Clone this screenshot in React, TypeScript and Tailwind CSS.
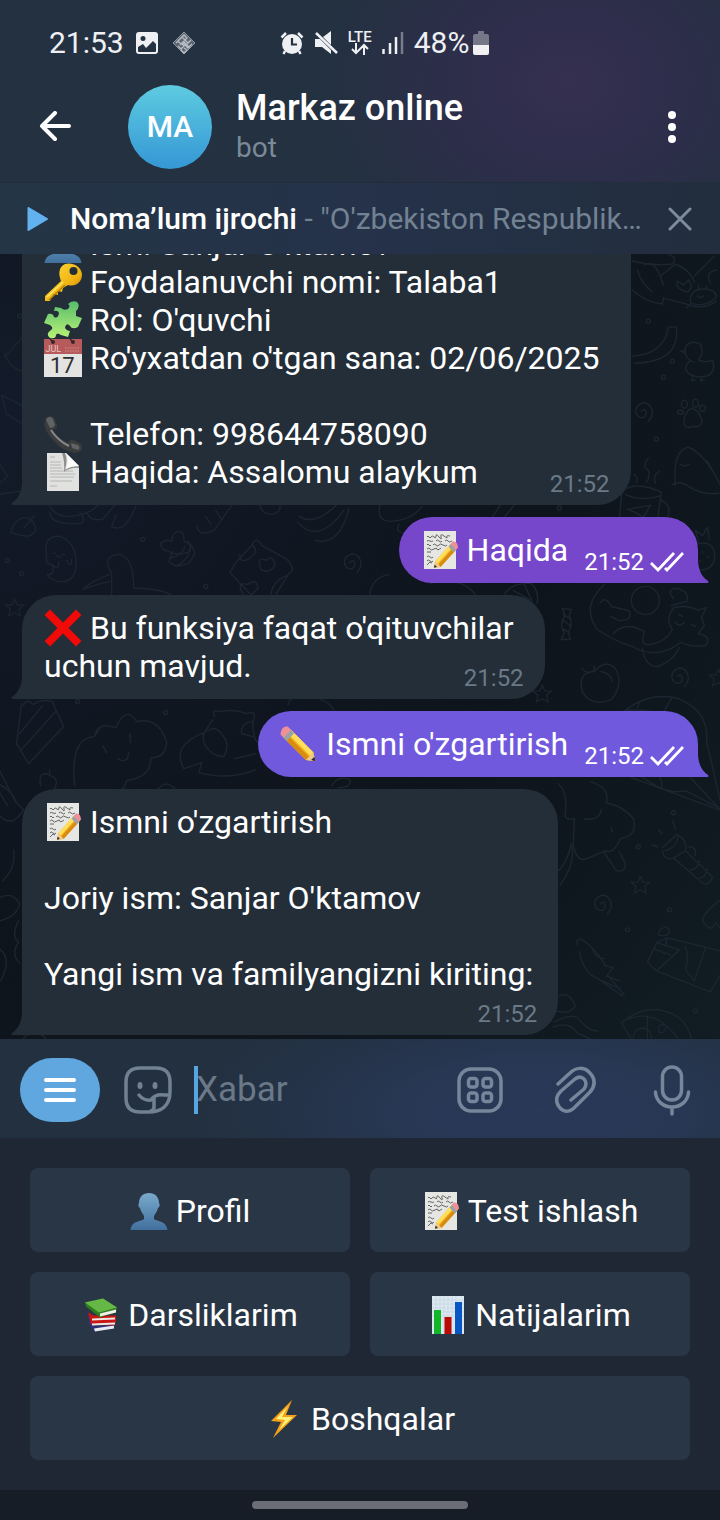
import type { ReactNode } from "react";

type EmojiName =
  | "bust" | "key" | "puzzle" | "calendar" | "phone" | "page"
  | "memo" | "cross" | "pencil" | "books" | "chart" | "bolt";

const pencilParts = (
  <>
    <path d="M2 31 L4 23 L25 3 L32 10 L11 30 Z" fill="#f5b71c" />
    <path d="M4 23 L25 3 L28 6 L7 26 Z" fill="#ffdf5c" />
    <path d="M8 27 L29 7 L32 10 L11 30 Z" fill="#d98a12" />
    <path d="M2 31 L4 23 L11 30 Z" fill="#efc88e" />
    <path d="M2 31 L3 27 L6 30 Z" fill="#2a2a2a" />
    <path d="M22 6 L26 2 L33 9 L29 13 Z" fill="#9aa3a8" />
    <path d="M25 3 L28 0 Q34 -1 35 7 L32 10 Z" fill="#ef8f96" />
  </>
);

const emojiArt: Record<EmojiName, ReactNode> = {
  bust: (
    <>
      <defs>
        <linearGradient id="bustFill" x1="0" y1="0" x2="0" y2="1">
          <stop offset="0" stopColor="#79aacb" />
          <stop offset="1" stopColor="#42709f" />
        </linearGradient>
      </defs>
      <path d="M19 1 C25 1 29 5 29 11 C30 12 30 15 28 16 C27 20 25 22 24 24 V27 C27 30 36 28 37.500 38 H0.500 C2 28 11 30 14 27 V24 C13 22 11 20 10 16 C8 15 8 12 9 11 C9 5 13 1 19 1 Z" fill="url(#bustFill)" />
    </>
  ),
  key: (
    <>
      <defs>
        <linearGradient id="keyFill" x1="0" y1="0" x2="1" y2="1">
          <stop offset="0" stopColor="#ffdf3d" />
          <stop offset="0.6" stopColor="#f1b313" />
          <stop offset="1" stopColor="#b77606" />
        </linearGradient>
      </defs>
      <path d="M21 1 C28 -1 37 3 38 11 C38 20 31 24 24 22 L19 25 L18 29 L14 28 L14 32 L10 31 L7 35 L6 38 L1 38 L1 33 L17 18 C14 10 15 4 21 1 Z" fill="url(#keyFill)" />
      <circle cx="29.500" cy="8" r="4" fill="#232e39" />
      <path d="M3 34 L19 19" stroke="#ffe766" strokeWidth="1.500" />
      <path d="M5 37 L21 22" stroke="#b67a08" strokeWidth="1.200" />
    </>
  ),
  puzzle: (
    <>
      <defs>
        <linearGradient id="puzzleFill" x1="0" y1="0" x2="0" y2="1">
          <stop offset="0" stopColor="#58bd6c" />
          <stop offset="1" stopColor="#b8f277" />
        </linearGradient>
      </defs>
      <path d="M11 6 L17 7 Q20 10 24 8 Q27 5 24 3 Q28 -1 33 1 Q37 5 32 10 L32 15 L38 17 L34 26 Q28 29 26 25 Q23 21 21 26 Q21 29 26 30 L24 36 L17 34 Q13 31 12 34 Q12 38 6 37 Q1 33 7 29 Q10 27 6 24 L0 22 L4 13 Q9 12 10 16 Q14 18 15 12 Q14 9 10 10 Z" fill="url(#puzzleFill)" />
    </>
  ),
  calendar: (
    <>
      <rect x="0" y="0" width="38" height="38" fill="#e3e4e2" />
      <rect x="0" y="0" width="38" height="15" fill="#b65a5b" />
      <circle cx="9" cy="3" r="2" fill="#39262b" />
      <circle cx="29" cy="3" r="2" fill="#39262b" />
      <path d="M9 3 L6 0 M29 3 L26 0" stroke="#39262b" strokeWidth="1.500" />
      <text x="1.500" y="13" fontSize="9" fill="#e9c6c4" fontFamily="Roboto, sans-serif">JUL</text>
      <path d="M21 9 H36 M21 12 H36" stroke="#cf8b8b" strokeWidth="1.200" strokeDasharray="1.500 1" />
      <text x="6" y="34" fontSize="22" fill="#2d2f31" fontFamily="Roboto, sans-serif">17</text>
    </>
  ),
  phone: (
    <>
      <path d="M2 3 Q7 -1 10 3 L13 10 Q14 13 9 15 Q13 23 24 28 Q26 23 30 25 L37 29 Q40 34 35 37 Q27 40 15 31 Q2 20 0 9 Z" fill="#3a3b3d" />
      <path d="M2 4 Q6 0 9 4 L11 10 Q10 13 6 13 L3 7 Z" fill="#606264" />
      <path d="M7 15 Q13 25 25 31" stroke="#85888a" strokeWidth="2" fill="none" />
      <path d="M27 28 L34 30 Q37 33 34 35 L28 33 Z" fill="#606264" />
    </>
  ),
  page: (
    <>
      <path d="M3 0 H22 L35 13 V38 H3 Z" fill="#e1e2e0" />
      <path d="M21 17 Q24 7 21 0 L18 0 Q21 9 20 19 Q27 14 35 15 V13 Q26 13 21 17 Z" fill="#8e8e8d" />
      <path d="M22 0 L35 13 Q27 13 22 16 Q25 7 22 0 Z" fill="#fbfbfa" />
      <path d="M6 4 H11 M6 9 H17 M6 12 H17 M6 15 H18 M6 18 H29 M6 21 H31 M6 24 H30 M6 28 H28 M6 33 H13" stroke="#b0b1b0" strokeWidth="0.900" />
    </>
  ),
  memo: (
    <>
      <rect x="3" y="0" width="32" height="38" fill="#e6e6e2" />
      <path d="M6 6 q1 -2 2 0 t2 0 t3 0 t2 -1 t3 1 t2 0 t3 -1 t3 1 t3 -1 M6 10 q1 -1 3 0 t3 0 M15 10 q1 -2 3 0 t3 0 M24 10 q2 -2 3 0 t4 0 M6 14 q1 -2 2 0 t2 0 M12 14 q1 -2 3 0 t3 0 t4 0 t4 0 M6 18 q2 -2 3 0 t4 0 t3 0 t4 -1 M6 21 h4 M6 26 q1 -2 3 0 t3 0 M6 30 q1 -2 3 0 t3 0 M6 34 l3 -3 l2 1" stroke="#55565a" strokeWidth="0.900" fill="none" />
      <g transform="translate(11.500 10.500) scale(0.730 0.850)">{pencilParts}</g>
    </>
  ),
  cross: (
    <path d="M6 0.500 L19 13.500 L32 0.500 L37.500 6 L24.500 19 L37.500 32 L32 37.500 L19 24.500 L6 37.500 L0.500 32 L13.500 19 L0.500 6 Z" fill="#f00a08" />
  ),
  pencil: <g transform="translate(37.500 1.500) scale(-1.060 1.120)">{pencilParts}</g>,
  books: (
    <g transform="translate(1 1.500)">
      <path d="M2 13 L6 22 L5 25 L11 34 L31 31 L31 27 L12 29 Z" fill="#30307d" />
      <path d="M11 31 L31 28 L31 31 L12 34 Z" fill="#e9eaf0" />
      <path d="M5 15 L8 27 L31 28 L33 24 L33 18 L11 18 Z" fill="#c81613" />
      <path d="M9 21 L32 20 V22 L9 23 Z M9 26 L32 25 V27 L9 28 Z" fill="#eee7e6" />
      <path d="M2 5 L20 1 L34 10 L33 15 L17 20 L3 9 Z" fill="#2d7d1e" />
      <path d="M2 5 L20 1 L34 10 L16 15 Z" fill="#65b845" />
      <path d="M17 16 L33 12 V15 L17 19 Z" fill="#f0f1ec" />
    </g>
  ),
  chart: (
    <>
      <rect x="3" y="0" width="32" height="38" fill="#dce8f1" />
      <path d="M3 4 H35 M3 8 H35 M3 12 H35 M3 16 H35 M3 20 H35 M7 0 V38 M11 0 V38 M15 0 V38 M19 0 V38 M23 0 V38 M27 0 V38" stroke="#c1d2df" strokeWidth="0.600" />
      <rect x="5" y="14" width="7" height="24" fill="#11b727" />
      <rect x="15.500" y="21" width="7" height="17" fill="#b90a08" />
      <rect x="26" y="6" width="7" height="32" fill="#0757c4" />
    </>
  ),
  bolt: (
    <>
      <path d="M27 0 L6 21 L16 22 L8 38 L32 15 L21 15 Z" fill="#f3a01a" />
      <path d="M23 6 L11 19 L20 20 L14 30 L28 17 L17 17 Z" fill="#fff27a" />
    </>
  ),
};

function Emoji({ name }: { name: EmojiName }) {
  return (
    <svg viewBox="0 0 38 38" className="size-[38px] shrink-0 overflow-visible" aria-hidden="true">
      {emojiArt[name]}
    </svg>
  );
}

function Line({ emoji, children }: { emoji?: EmojiName; children?: ReactNode }) {
  return (
    <p className="flex h-[38px] items-center gap-2 whitespace-nowrap">
      {emoji && <Emoji name={emoji} />}
      <span>{children}</span>
    </p>
  );
}

const star = "m0 -10 l3 7 l8 0 l-6 5 l2 8 l-7 -4 l-7 4 l2 -8 l-6 -5 l8 0 Z";
const spiral = "m0 0 q4 -4 5 2 q-1 6 -7 4 q-6 -4 -2 -11 q7 -7 13 0 q5 8 -2 15";

const stars: [number, number][] = [[15, 607], [542, 693], [640, 884], [718, 677]];
const spirals: [number, number][] = [[641, 411], [350, 562], [677, 676], [600, 903]];
const dots: [number, number][] = [
  [20, 316], [648, 321], [672, 361], [663, 377], [656, 439], [559, 508], [143, 539], [22, 573], [206, 586],
  [78, 701], [166, 712], [673, 812], [638, 846], [669, 909], [627, 929], [695, 1010], [8, 560],
];

function Wallpaper() {
  return (
    <svg
      viewBox="0 254 720 784"
      preserveAspectRatio="xMidYMid slice"
      className="absolute inset-0 size-full"
      fill="none"
      stroke="#1c2631"
      strokeWidth="1.400"
      strokeLinecap="round"
      strokeLinejoin="round"
      aria-hidden="true"
    >
      {stars.map(([x, y]) => <path key={`${x}-${y}`} transform={`translate(${x} ${y}) scale(.85)`} d={star} />)}
      {spirals.map(([x, y]) => <path key={`${x}-${y}`} transform={`translate(${x} ${y})`} d={spiral} />)}
      {dots.map(([x, y]) => <circle key={`${x}-${y}`} cx={x} cy={y} r="2" />)}
      {/* plant, crab, ribbon and chick */}
      <path d="M632 261 Q650 266 672 264 Q678 258 668 254 M637 270 Q640 282 652 292 M644 265 Q655 258 663 285 M660 276 L675 264 Q690 270 694 282 M632 290 Q645 302 662 304 L663 298 L690 305 Q702 310 716 301 M694 276 L714 256" />
      <path d="M690 297 Q693 288 704 289 Q716 290 716 297 Q706 308 690 303 Z M687 292 Q674 289 677 281 L683 285 L688 280 Q694 288 687 292 Z M710 283 Q704 272 716 270 M697 296 q3 3 6 0 M689 305 l-3 3 M698 289 v-4 M706 289 v-3" />
      <path d="M632 356 Q664 354 668 327 L676 327 Q680 362 634 363" />
      <path d="M694 362 Q683 359 685 347 Q690 339 700 344 Q704 353 698 360 Q706 363 712 360 Q716 372 706 376 Q690 379 685 369 Q685 365 689 361 M685 350 l-5 1 l5 2 M692 377 v4 M701 377 v4 M691 380 h4 M700 380 h4" />
      {/* paw, cat and steaming cup */}
      <path d="M692 408 Q699 411 702 421 Q698 429 693 426 Q687 429 684 425 Q682 417 688 410 Z" />
      <ellipse cx="684" cy="404" rx="3" ry="4" /><ellipse cx="695" cy="403" rx="3" ry="4" /><ellipse cx="702" cy="408" rx="3" ry="3" /><ellipse cx="680" cy="412" rx="3" ry="2" />
      <path d="M675 485 Q672 450 688 447 Q705 454 720 485 M672 484 Q680 480 688 486 Q702 495 718 493 M680 464 q4 3 9 0 M707 461 l4 7" />
      <path d="M626 488 Q640 482 661 492 L657 520 M622 488 L619 518 M625 494 Q642 502 661 495 M661 500 Q672 505 667 518 M627 509 L650 505 L643 517 L635 512 Z M648 458 q-7 8 0 12 q2 7 -2 12 M659 471 q-7 4 -4 12 M634 474 q4 3 2 8" />
      {/* strawberry and food scraps */}
      <path d="M698 543 Q716 540 714 560 Q710 571 698 569 Q684 560 698 543 M698 541 l-3 -11 l7 5 l5 -8 l2 12 M702 551 v1 M708 556 v1 M700 560 v1" />
      <path d="M380 505 Q376 520 390 521 Q412 520 422 506 M399 524 q-5 8 7 9 M492 517 l8 -12 M504 517 l10 -12" />
      {/* leaf, ghost and bird */}
      <path d="M11 532 Q17 514 30 518 Q43 531 28 536 Q20 535 11 532 M25 527 L35 515" />
      <path d="M50 505 Q55 517 72 516 Q90 514 98 505 M50 512 Q51 525 82 523 Q86 517 80 512 M88 512 Q89 521 103 519 L115 505 M112 526 Q125 534 136 506 M112 526 L117 514" />
      <path d="M47 554 Q43 535 61 536 Q79 544 76 568 Q74 583 58 581 Q48 577 48 574 Q55 575 53 565 Q44 562 47 554 M54 553 h2 M63 554 h2 M57 555 q3 4 5 0 M53 564 q6 8 6 -2 M67 560 q5 9 5 -1" />
      <path d="M112 595 V573 Q102 557 117 554 Q134 554 134 588 Q155 587 171 594 M110 574 Q93 580 83 589 Q99 583 112 581" />
      {/* carrot, pillow and bananas */}
      <path d="M169 551 Q160 549 161 543 Q166 538 172 541 Q172 531 180 531 Q185 532 184 541 Q193 543 190 551 Q182 555 173 553 Z M173 551 L169 561 Q176 569 190 562 L195 553 Q192 544 188 541 M170 558 Q184 554 185 546 M176 566 Q189 560 190 548" />
      <path d="M235 564 L230 572 L251 594 M235 563 L252 545 Q256 535 262 545 L287 559 Q297 569 289 573 L276 594 M240 554 Q240 563 248 559 Q260 551 253 545 M261 569 Q256 555 267 560 Q273 553 275 565 Q270 574 261 569 M244 595 Q235 581 248 584 Q257 577 258 588 L250 596 M271 595 Q272 581 287 575" />
      <path d="M299 516 Q315 526 336 505 M298 522 Q318 545 344 510 M315 540 Q340 546 349 508 M197 525 Q199 538 215 529 L232 505 M206 516 l5 8 M216 510 l5 8 M260 505 q2 9 12 9 q9 -1 8 -9" />
      {/* sleeping cat, candy and globe */}
      <path d="M370 594 Q372 577 389 574 M475 594 Q460 575 430 583 M504 595 Q510 582 531 583 Q539 590 537 603 M513 590 L529 599 M524 584 L532 601" />
      <path d="M562 608 l9 1 l-2 6 q4 8 -1 17 l2 7 l-9 0 l3 -7 q-6 -8 1 -17 Z M563 620 l8 6 M562 628 l7 4 M563 614 l8 5" />
      <path d="M604 584 Q580 606 597 629 Q613 640 632 646 Q657 660 680 642 M605 584 M600 602 Q605 595 611 606 L628 610 Q634 620 618 620 L610 616 M613 633 Q625 620 644 631 Q639 646 650 644 Q665 642 672 629 Q664 617 674 607 Q687 604 698 610 L706 607 L701 617 L704 625 L698 633 Q712 636 705 645 Q690 647 681 642 M642 648 Q645 667 658 666 Q674 659 679 647 M673 598 Q665 588 677 588 Q690 592 686 601 L671 605 M678 614 l4 2 M691 624 l4 2 M675 622 q4 5 9 0" />
      <circle cx="645" cy="600" r="14" />
      {/* apple and parachute */}
      <path d="M594 671 Q577 672 582 691 Q591 707 611 699 Q624 684 615 668 Q605 658 594 671 M594 670 Q585 674 582 668 M594 671 V665 M600 671 Q610 672 612 681" />
      <path d="M620 714 Q647 690 678 698 Q710 711 706 744 M625 710 Q667 705 698 739 M637 707 L640 700 M664 710 L671 698 M640 775 Q666 795 685 790 L720 808 M631 777 L718 809 M690 777 L720 809 M706 740 L720 801 M661 787 Q662 779 659 777" />
      {/* cake, cloud and cat on pillow */}
      <path d="M22 703 L17 743 L29 763 L64 726 L53 702 M20 733 L43 705 M22 749 L56 711 M24 705 Q26 697 34 704 Q42 698 53 701" />
      <path d="M75 785 Q70 737 95 736 Q97 721 116 727 Q127 704 137 721 Q159 716 167 742 Q165 758 151 757 Q152 776 127 780 Q125 789 118 791 M96 734 L100 729 M103 745 L107 752 M130 733 L131 742 M118 758 Q128 764 129 752 M41 785 Q38 770 50 774 L50 769 M50 775 Q61 777 54 790" />
      <path d="M215 716 Q211 708 220 711 Q234 708 247 713 Q258 709 253 721 Q253 738 258 742 M213 719 L203 734 M211 729 Q200 730 205 744 Q212 756 224 756 Q231 744 223 735 Q216 725 211 729 M204 732 Q171 745 184 768 L202 762 L199 772 Q230 780 256 769 M235 758 l21 -5 M252 721 q-12 2 -10 12 l11 3 M288 704 Q292 693 305 694 Q333 700 335 713" />
      <path d="M0 770 L16 801 M0 784 Q12 789 17 802 L24 809 Q13 828 0 815 M0 792 L8 805 M157 790 Q165 778 175 788 M332 785 Q338 774 350 779 Q352 787 338 787 M14 849 Q17 867 3 880 M0 897 Q13 890 20 903 Q17 916 0 920 M19 920 Q11 935 19 941 Q11 954 20 962 M0 948 Q13 958 1 980" />
      {/* broccoli and torch */}
      <path d="M558 783 Q568 792 565 813 Q564 820 574 818 L573 845 Q577 862 586 858 L605 850 Q613 854 620 838 Q638 835 633 818 Q624 806 606 802 Q610 787 590 781 M584 818 q15 3 17 -9 M604 852 l12 18 q9 2 9 -7 l-6 -12 M611 827 l1 4" />
      <path d="M662 847 L676 834 Q687 838 685 850 L672 858 Q663 859 662 850 M665 850 Q676 847 678 835 M685 850 L712 876 Q710 884 703 883 L674 858 M688 846 q8 -1 7 9 M690 869 q7 0 9 -9 M699 877 q6 0 8 -9 M672 820 l3 8 M652 844 l5 2 M658 829 l4 4" />
      {/* squid, chocolate and jellyfish */}
      <path d="M577 944 Q575 932 590 945 Q601 956 605 965 L613 967 L607 974 L624 994 M579 951 Q583 972 598 978 L622 995 M592 947 Q593 956 604 958 M602 980 l18 8 M606 975 l13 5" />
      <path d="M647 961 L657 941 L667 937 L720 950 M647 961 L656 970 L710 991 L720 974 M657 942 L679 949 L656 970 M653 948 L670 954 M667 937 L665 945 M685 946 Q689 957 685 969 L694 980 L705 947 M658 934 q0 -7 9 -8 q5 7 -3 9 Z M702 919 q2 -8 18 -20 M702 919 q4 9 10 8 l3 -5 l5 5" />
      <path d="M559 995 Q569 990 575 1005 Q570 1014 556 1010 M554 1021 Q575 1010 580 1020 Q590 1031 598 1030 M553 1026 Q570 1020 577 1032 L590 1038 M558 870 Q566 864 571 843 Q576 862 560 884" />
      <path d="M621 1022 Q650 998 679 1017 Q688 1025 691 1038 M621 1022 L631 1038 M628 1018 Q655 1007 678 1038 M647 1015 V1038 M658 1026 q5 -5 8 0 q-3 8 -7 5 Z" />
      <circle cx="642" cy="1036" r="9" />
      {/* left margin pencil and diamonds */}
      <path d="M2 395 L22 405 M2 395 L7 414 L22 423 M5 357 L22 338 M5 353 Q10 368 22 371 M0 464 L8 476 L0 483 M0 494 L20 491" />
      <circle cx="35" cy="1046" r="14" />
    </svg>
  );
}

function Tail({ side }: { side: "left" | "right" }) {
  return (
    <svg
      viewBox="0 0 12 24"
      className={side === "left" ? "absolute bottom-0 -left-[11px] h-6 w-3" : "absolute -right-[11px] bottom-0 h-6 w-3 -scale-x-100"}
      aria-hidden="true"
    >
      <path d="M12 0 H11 C11 11 7 18 1 22 Q-0.500 24 2 24 H12 Z" fill="currentColor" />
    </svg>
  );
}

function Incoming({ children, time, stacked = false }: { children: ReactNode; time: string; stacked?: boolean }) {
  return (
    <article className="relative grid shrink-0 self-start rounded-[34px] rounded-bl-none bg-[#232e39] pt-3.5 pr-[21px] pb-[7px] pl-[22px]">
      <div className={stacked ? "mb-[7px] pr-1" : "col-start-1 row-start-1 mb-[7px] pr-2.5"}>{children}</div>
      <time
        className={
          stacked
            ? "self-end justify-self-end text-2xl leading-7 text-[#6b7986]"
            : "col-start-1 row-start-1 self-end justify-self-end text-2xl leading-7 text-[#6b7986]"
        }
      >
        {time}
      </time>
      <span className="text-[#232e39]"><Tail side="left" /></span>
    </article>
  );
}

function Outgoing({ emoji, text, time, tone }: { emoji: EmojiName; text: string; time: string; tone: "violet" | "indigo" }) {
  const colors = tone === "violet" ? "bg-[#7646cb] text-[#7646cb]" : "bg-[#7059dd] text-[#7059dd]";
  return (
    <article className={`relative flex shrink-0 items-end gap-4 self-end rounded-[33px] rounded-br-none pt-3.5 pr-3.5 pb-[7px] pl-[22px] ${colors}`}>
      <div className="mb-[7px] text-white"><Line emoji={emoji}>{text}</Line></div>
      <span className="flex items-center gap-1.5 text-white">
        <time className="text-2xl leading-7">{time}</time>
        <svg viewBox="0 0 34 22" className="h-[22px] w-[34px]" fill="none" stroke="currentColor" strokeWidth="2.800" aria-label="O'qildi">
          <path d="M1 12 L8 19 L24 2 M15 17 L17 19 L33 2" />
        </svg>
      </span>
      <Tail side="right" />
    </article>
  );
}

function StatusBar() {
  return (
    <div className="flex h-[84px] items-center pt-0.5 pl-[49px] text-[30px] leading-9 text-[#eef0f3]">
      <span>21:53</span>
      <svg viewBox="0 0 22 22" className="ml-3 size-[22px]" aria-hidden="true">
        <path fillRule="evenodd" fill="currentColor" d="M3 0 H19 Q22 0 22 3 V19 Q22 22 19 22 H3 Q0 22 0 19 V3 Q0 0 3 0 Z M2 15 V19 Q2 20 3 20 H19 Q20 20 20 19 V12 L17 9 L10 16 L7 12 Z M7 4 A2.500 2.500 0 1 0 7 9 A2.500 2.500 0 1 0 7 4 Z" />
      </svg>
      <svg viewBox="0 0 24 24" className="ml-3.5 size-6" fill="none" stroke="#b9bec5" strokeWidth="1.300" aria-hidden="true">
        <path d="M12 1 L23 12 L12 23 L1 12 Z" fill="#5b6572" stroke="#8d949d" strokeWidth="1" />
        <path d="M4 12 L12 4 L15 7 L8 14 M6 15 L9 18 L12 15 L9 12 M12 8 L16 12 L19 9 M11 12 L16 17 L20 13 M12 11 L18 17 M9 19 L12 22 L15 19 L12 17 M14 14 L17 11 M6 10 L9 13 M10 6 L13 9" />
      </svg>
      <svg viewBox="0 0 24 24" className="ml-[84px] size-6" aria-hidden="true">
        <circle cx="12" cy="13" r="10" fill="currentColor" />
        <path d="M1.500 6.500 L6 2 M22.500 6.500 L18 2 M5 20 L3.500 23 M19 20 L20.500 23" stroke="currentColor" strokeWidth="2.500" fill="none" />
        <path d="M12 7 V13.500 H17" stroke="#263242" strokeWidth="2.200" fill="none" />
      </svg>
      <svg viewBox="0 0 24 24" className="ml-2.5 size-6" fill="currentColor" aria-hidden="true">
        <path d="M1 8 H6 L17 19 V23 L8 16 H1 Z M9 6 L17 0 V14 Z" />
        <path d="M2 2 L23 22" stroke="currentColor" strokeWidth="2.500" />
      </svg>
      <span className="ml-2.5 flex w-6 flex-col items-center">
        <span className="text-[15px] leading-3 font-medium">LTE</span>
        <svg viewBox="0 0 20 12" className="h-3 w-5" fill="none" stroke="currentColor" strokeWidth="2" aria-hidden="true">
          <path d="M6 0 V10 M2 6 L6 10 L10 6 M14 12 V2 M10 6 L14 2 L18 6" />
        </svg>
      </span>
      <svg viewBox="0 0 22 24" className="ml-2.5 h-6 w-[22px]" strokeWidth="2.500" aria-hidden="true">
        <path d="M1.500 18 V23 M8 12 V23 M14 6 V23" stroke="currentColor" />
        <path d="M20 1 V23" stroke="#777b8a" />
      </svg>
      <span className="ml-2.5">48%</span>
      <svg viewBox="0 0 16 24" className="ml-1 h-6 w-4" aria-hidden="true">
        <path d="M5 0 H11 V3 H14 Q16 3 16 5 V14 H0 V5 Q0 3 2 3 H5 Z" fill="#757687" />
        <path d="M0 14 H16 V22 Q16 24 14 24 H2 Q0 24 0 22 Z" fill="#f1f1f4" />
      </svg>
    </div>
  );
}

function ChatHeader() {
  return (
    <div className="flex h-[98px] items-center pr-6 pb-3 pl-[31px]">
      <button type="button" aria-label="Orqaga" className="flex size-12 items-center justify-center">
        <svg viewBox="0 0 34 32" className="h-8 w-[34px]" fill="none" stroke="#fff" strokeWidth="4" strokeLinecap="round" strokeLinejoin="round" aria-hidden="true">
          <path d="M31 15 H4 M17 2 L4 15 L17 28" />
        </svg>
      </button>
      <div className="ml-[49px] flex size-[84px] items-center justify-center rounded-full bg-linear-to-b from-[#5ecbe0] to-[#3597d5] text-[30px] font-medium text-white">
        MA
      </div>
      <div className="ml-6 min-w-0 flex-1 pt-0.5">
        <h1 className="truncate text-[36px] leading-10 font-medium text-white">Markaz online</h1>
        <p className="text-[28px] leading-10 text-[#7b8a99]">bot</p>
      </div>
      <button type="button" aria-label="Menyu" className="flex size-12 items-center justify-center">
        <svg viewBox="0 0 8 32" className="h-8 w-2" fill="#fff" aria-hidden="true">
          <circle cx="4" cy="4" r="4" /><circle cx="4" cy="16" r="4" /><circle cx="4" cy="28" r="4" />
        </svg>
      </button>
    </div>
  );
}

function PlayerBar() {
  return (
    <div className="flex h-[72px] items-center border-t border-[#212d3a] bg-linear-to-r from-[#243545] via-[#25324a] to-[#222d3d] pr-[18px] pl-[26px] text-[30px]">
      <button type="button" aria-label="Ijro etish" className="flex h-11 w-11 items-center">
        <svg viewBox="0 0 23 26" className="h-[26px] w-[23px]" aria-hidden="true">
          <path d="M2.500 2 L21 13 L2.500 24 Z" fill="#62b2f0" stroke="#62b2f0" strokeWidth="2" strokeLinejoin="round" />
        </svg>
      </button>
      <p className="min-w-0 flex-1 truncate text-[#728293]">
        <span className="font-medium text-white">Noma’lum ijrochi</span> - "O'zbekiston Respublik…
      </p>
      <button type="button" aria-label="Yopish" className="flex size-11 items-center justify-center">
        <svg viewBox="0 0 24 24" className="size-6" stroke="#7d8c9b" strokeWidth="3" strokeLinecap="round" aria-hidden="true">
          <path d="M2 2 L22 22 M22 2 L2 22" />
        </svg>
      </button>
    </div>
  );
}

function Composer() {
  return (
    <div className="flex h-[99px] shrink-0 items-center bg-[#223040] bg-[radial-gradient(ellipse_340px_130px_at_75%_75%,#2a3859,#283753_40%,transparent)] pt-0.5 pl-5 text-[#76869b]">
      <button type="button" aria-label="Bot menyusi" className="flex h-16 w-20 items-center justify-center rounded-full bg-[#60a7df]">
        <svg viewBox="0 0 32 24" className="h-6 w-8" stroke="#fff" strokeWidth="4" strokeLinecap="round" aria-hidden="true">
          <path d="M2 2 H30 M2 12 H30 M2 22 H30" />
        </svg>
      </button>
      <button type="button" aria-label="Stikerlar" className="ml-6 text-[#718191]">
        <svg viewBox="0 0 48 48" className="size-12" fill="none" stroke="currentColor" strokeWidth="3.500" strokeLinecap="round" strokeLinejoin="round" aria-hidden="true">
          <path d="M16 2 H32 Q46 2 46 16 V26 C46 39 38 46 24 46 H16 Q2 46 2 32 V16 Q2 2 16 2 Z" />
          <path d="M15 29 Q20 35 27 34 Q31 28 40 29 H45 M30 32 V41 Q30 44 27 45" />
          <ellipse cx="16" cy="19.500" rx="2.500" ry="3.500" fill="currentColor" stroke="none" />
          <ellipse cx="31" cy="19.500" rx="2.500" ry="3.500" fill="currentColor" stroke="none" />
        </svg>
      </button>
      <div className="relative ml-6 flex min-w-0 flex-1 items-center">
        <input
          type="text"
          aria-label="Xabar"
          placeholder="Xabar"
          className="h-12 w-full min-w-0 bg-transparent text-[35px] text-white outline-none placeholder:text-[#6a7887] placeholder:opacity-100"
        />
        <span className="absolute inset-y-0 -left-0.5 w-1 bg-[#57a5e2]" />
      </div>
      <button type="button" aria-label="Klaviatura" className="flex w-24 shrink-0 justify-center">
        <svg viewBox="0 0 46 46" className="size-[46px]" fill="none" stroke="currentColor" strokeWidth="3.500" aria-hidden="true">
          <rect x="2" y="2" width="42" height="42" rx="12" />
          <rect x="11.500" y="11.500" width="8.500" height="8.500" rx="2.500" /><rect x="26" y="11.500" width="8.500" height="8.500" rx="2.500" />
          <rect x="11.500" y="26" width="8.500" height="8.500" rx="2.500" /><rect x="26" y="26" width="8.500" height="8.500" rx="2.500" />
        </svg>
      </button>
      <button type="button" aria-label="Biriktirish" className="flex w-24 shrink-0 justify-center">
        <svg viewBox="0 0 42 48" className="h-12 w-[42px]" fill="none" stroke="currentColor" strokeWidth="3.500" strokeLinecap="round" strokeLinejoin="round" aria-hidden="true">
          <path d="M3 18 L15 7 C21 1 29 1 34 6 C40 12 41 19 35 26 L21 40 C16 46 10 47 5 42 C0 36 1 30 6 25 L20 13 C24 10 27 11 29 13 C32 16 31 20 29 23 L16 34" />
        </svg>
      </button>
      <button type="button" aria-label="Ovozli xabar" className="flex w-24 shrink-0 justify-center">
        <svg viewBox="0 0 38 52" className="h-[52px] w-[38px]" fill="none" stroke="currentColor" strokeWidth="3.500" strokeLinecap="round" aria-hidden="true">
          <rect x="9.500" y="3" width="19" height="33" rx="9.500" />
          <path d="M2.500 28 C3 37 10 43 19 43 C28 43 35 37 35.500 28 M19 44 V50" />
        </svg>
      </button>
    </div>
  );
}

const keys: { emoji: EmojiName; label: string; wide?: boolean }[] = [
  { emoji: "bust", label: "Profil" },
  { emoji: "memo", label: "Test ishlash" },
  { emoji: "books", label: "Darsliklarim" },
  { emoji: "chart", label: "Natijalarim" },
  { emoji: "bolt", label: "Boshqalar", wide: true },
];

export default function App() {
  return (
    <div className="flex h-dvh flex-col bg-[#0f151d] font-['Roboto',sans-serif] text-[32px] leading-[38px] text-white">
      <header className="shrink-0 bg-[#243141] bg-[radial-gradient(ellipse_240px_190px_at_79%_33%,#352f50,#2e2e4b_45%,transparent)]">
        <StatusBar />
        <ChatHeader />
        <PlayerBar />
      </header>

      <main className="relative flex min-h-0 flex-1 flex-col overflow-hidden bg-[radial-gradient(circle_at_0%_20%,#131a29,#0e141b_60%,#111c23)]">
        <Wallpaper />
        <div className="relative flex min-h-0 flex-1 flex-col justify-end gap-3 px-[22px] pb-1">
          <Incoming time="21:52">
            <Line emoji="bust">Ism: Sanjar O'ktamov</Line>
            <Line emoji="key">Foydalanuvchi nomi: Talaba1</Line>
            <Line emoji="puzzle">Rol: O'quvchi</Line>
            <Line emoji="calendar">Ro'yxatdan o'tgan sana: 02/06/2025</Line>
            <Line />
            <Line emoji="phone">Telefon: 998644758090</Line>
            <Line emoji="page">Haqida: Assalomu alaykum</Line>
          </Incoming>
          <Outgoing emoji="memo" text="Haqida" time="21:52" tone="violet" />
          <Incoming time="21:52">
            <Line emoji="cross">Bu funksiya faqat o'qituvchilar</Line>
            <Line>uchun mavjud.</Line>
          </Incoming>
          <Outgoing emoji="pencil" text="Ismni o'zgartirish" time="21:52" tone="indigo" />
          <Incoming time="21:52" stacked>
            <Line emoji="memo">Ismni o'zgartirish</Line>
            <Line />
            <Line>Joriy ism: Sanjar O'ktamov</Line>
            <Line />
            <Line>Yangi ism va familyangizni kiriting:</Line>
          </Incoming>
        </div>
      </main>

      <Composer />

      <section aria-label="Bot tugmalari" className="grid shrink-0 grid-cols-2 gap-5 bg-[#1e2733] p-[30px]">
        {keys.map((key) => (
          <button
            key={key.label}
            type="button"
            className={
              key.wide
                ? "col-span-2 flex h-[84px] items-center justify-center gap-2 rounded-lg bg-[#293645] pt-0.5"
                : "flex h-[84px] items-center justify-center gap-2 rounded-lg bg-[#293645] pt-0.5"
            }
          >
            <Emoji name={key.emoji} />
            <span>{key.label}</span>
          </button>
        ))}
      </section>

      <footer className="flex h-[30px] shrink-0 items-center justify-center bg-[#161d27]">
        <div className="h-2 w-3/10 rounded-full bg-[#6b6e77]" />
      </footer>
    </div>
  );
}
